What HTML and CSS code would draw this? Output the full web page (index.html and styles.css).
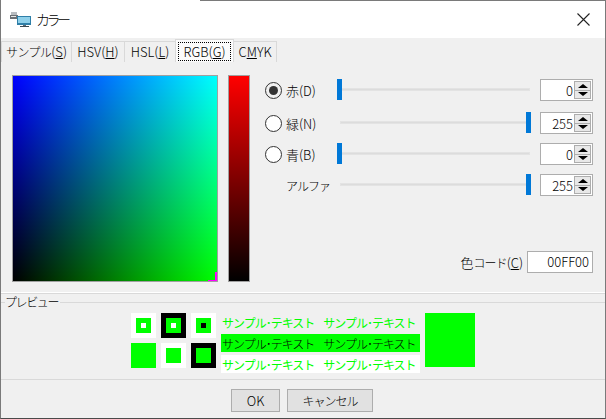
FILE: index.html
```html
<!DOCTYPE html>
<html lang="ja">
<head>
  <meta charset="UTF-8">
  <title>カラー</title>
  <link rel="stylesheet" href="styles.css">
</head>
<body>
  <div class="dialog">
    <div class="titlebar">
      <svg class="app-icon" width="22" height="17" viewBox="0 0 22 17">
        <rect x="1" y="1" width="6" height="3" fill="#b8bcc0"/>
        <rect x="0" y="4" width="8" height="4" fill="#6b7075"/>
        <rect x="1" y="5" width="5" height="1" fill="#e8e8e8"/>
        <rect x="7" y="5" width="14" height="9" fill="#2f7fa8"/>
        <rect x="8" y="6" width="12" height="6" fill="#8fd0ea"/>
        <rect x="13" y="14" width="3" height="1" fill="#5a6a74"/>
        <rect x="10" y="15" width="9" height="1" fill="#3c4a52"/>
      </svg>
      <span class="title">カラー</span>
      <svg class="close" width="13" height="13" viewBox="0 0 13 13">
        <path d="M0.5 0.5L12.5 12.5M12.5 0.5L0.5 12.5" stroke="#222" stroke-width="1.1" fill="none"/>
      </svg>
    </div>

    <div class="tabs">
      <div class="tab tab-first"><span class="kana">サンプル</span>(<u>S</u>)</div>
      <div class="tab tab-hsv">HSV(<u>H</u>)</div>
      <div class="tab tab-hsl">HSL(<u>L</u>)</div>
      <div class="tab tab-active"><span class="focus">RGB(<u>G</u>)</span></div>
      <div class="tab tab-cmyk">C<u>M</u>YK</div>
    </div>

    <div class="panel">
      <div class="picker">
        <div class="field"><div class="cursor"></div></div>
        <div class="strip"></div>
      </div>

      <div class="controls">
        <div class="row">
          <span class="radio checked"></span><span class="label">赤(D)</span>
          <div class="slider"><div class="thumb thumb-min"></div></div>
          <div class="spin"><span class="spin-value">0</span><span class="arrows"><i class="up"></i><i class="down"></i></span></div>
        </div>
        <div class="row row-green">
          <span class="radio"></span><span class="label">緑(N)</span>
          <div class="slider"><div class="thumb thumb-max"></div></div>
          <div class="spin"><span class="spin-value">255</span><span class="arrows"><i class="up"></i><i class="down"></i></span></div>
        </div>
        <div class="row">
          <span class="radio"></span><span class="label">青(B)</span>
          <div class="slider"><div class="thumb thumb-min"></div></div>
          <div class="spin"><span class="spin-value">0</span><span class="arrows"><i class="up"></i><i class="down"></i></span></div>
        </div>
        <div class="row">
          <span class="radio-space"></span><span class="label"><span class="kana">アルファ</span></span>
          <div class="slider"><div class="thumb thumb-max"></div></div>
          <div class="spin"><span class="spin-value">255</span><span class="arrows"><i class="up"></i><i class="down"></i></span></div>
        </div>
        <div class="code-row">
          <span class="code-label">色<span class="kana">コード</span>(<u>C</u>)</span>
          <div class="code-input">00FF00</div>
        </div>
      </div>
    </div>

    <div class="preview">
      <div class="preview-legend"><span class="kana">プレビュー</span></div>
      <div class="preview-body">
        <div class="swatches">
          <div class="swatch sw-white"><div class="inner"><div class="dot dot-white"></div></div></div>
          <div class="swatch sw-black"><div class="inner"><div class="dot dot-white"></div></div></div>
          <div class="swatch sw-white"><div class="inner"><div class="dot dot-black"></div></div></div>
          <div class="swatch sw-green"></div>
          <div class="swatch sw-white"><div class="inner"></div></div>
          <div class="swatch sw-black"><div class="inner"></div></div>
        </div>
        <div class="samples">
          <div class="sample sample-plain"><span class="kana">サンプル･テキスト</span><span class="kana">サンプル･テキスト</span></div>
          <div class="sample sample-green"><span class="kana">サンプル･テキスト</span><span class="kana">サンプル･テキスト</span></div>
          <div class="sample sample-white"><span class="kana">サンプル･テキスト</span><span class="kana">サンプル･テキスト</span></div>
        </div>
        <div class="big-swatch"></div>
      </div>
    </div>

    <div class="footer">
      <button class="btn btn-ok">OK</button>
      <button class="btn btn-cancel"><span class="kana">キャンセル</span></button>
    </div>
  </div>
</body>
</html>
```

FILE: styles.css
```css
* {
  box-sizing: border-box;
}
html, body {
  margin: 0;
  padding: 0;
}
body {
  font-family: "Noto Sans CJK JP", "Liberation Sans", sans-serif;
  font-size: 13px;
  font-weight: 300;
  color: #000;
  background-color: #f0f0f0;
  overflow: hidden;
}
u {
  text-underline-offset: 1px;
}
.kana {
  font-size: 12px;
  letter-spacing: -1px;
}
.dialog {
  width: 606px;
  height: 419px;
  display: flex;
  flex-direction: column;
  background-color: #f0f0f0;
  border-left: 1px solid #7a7a7a;
  border-right: 1px solid #7a7a7a;
  border-bottom: 1px solid #4a4a4a;
}

/* title bar */
.titlebar {
  position: relative;
  height: 38px;
  background-color: #fff;
  display: flex;
  align-items: center;
  padding: 0 15px 0 9px;
  flex-shrink: 0;
}
.titlebar::before {
  content: "";
  position: absolute;
  left: 199px;
  right: 0;
  top: 0;
  height: 1px;
  background-color: #7a7a7a;
}
.title {
  margin-left: 4px;
  font-size: 14px;
  letter-spacing: -3.5px;
}
.close {
  margin-left: auto;
}

/* tabs */
.tabs {
  height: 24px;
  display: flex;
  align-items: flex-end;
  flex-shrink: 0;
}
.tab {
  height: 21px;
  line-height: 20px;
  border: 1px solid #d9d9d9;
  border-bottom: none;
  background-color: #f0f0f0;
  text-align: center;
  white-space: nowrap;
  margin-right: -1px;
}
.tab-first { width: 71px; }
.tab-first .kana { letter-spacing: -0.6px; }
.tab-hsv { width: 54px; }
.tab-hsl { width: 52px; }
.tab-active {
  width: 59px;
  height: 23px;
  padding: 2px;
  background-color: #fbfbfb;
  position: relative;
  line-height: 17px;
}
.focus {
  display: block;
  height: 19px;
  border: 1px dotted #000;
}
.tab-cmyk { width: 44px; }

/* picker and sliders */
.panel {
  height: 231px;
  flex-shrink: 0;
  display: flex;
  padding: 13px 0 0 11px;
  border-bottom: 1px solid #fff;
}
.picker {
  display: flex;
  gap: 10px;
}
.field {
  position: relative;
  width: 206px;
  height: 207px;
  border: 1px solid #a0a0a0;
  background-image: linear-gradient(to right, #000, #0f0), linear-gradient(to bottom, #00f, #000);
  background-blend-mode: screen;
}
.cursor {
  position: absolute;
  right: 0;
  bottom: 0;
  width: 9px;
  height: 9px;
  border-right: 2px solid #f0f;
  border-bottom: 1px solid #f0f;
}
.strip {
  width: 22px;
  height: 207px;
  border: 1px solid #a0a0a0;
  background-image: linear-gradient(to bottom, #f00, #000);
}
.controls {
  margin-left: 15px;
  width: 328px;
  padding-top: 4px;
}
.row {
  display: flex;
  align-items: center;
  height: 22px;
  margin-bottom: 9px;
}
.row-green {
  margin-top: 11px;
}
.radio, .radio-space {
  width: 17px;
  height: 17px;
  flex-shrink: 0;
  margin-right: 4px;
}
.radio {
  border: 1px solid #333;
  border-radius: 50%;
  background-color: #fff;
  position: relative;
}
.radio.checked {
  background-color: #f0f0f0;
}
.radio.checked::after {
  content: "";
  position: absolute;
  left: 3px;
  top: 3px;
  width: 9px;
  height: 9px;
  border-radius: 50%;
  background-color: #333;
}
.label {
  width: 54px;
  flex-shrink: 0;
}
.slider {
  position: relative;
  width: 190px;
  height: 3px;
  margin-bottom: 2px;
  background-color: #dcdcdc;
  border: 1px solid #e3e3e3;
}
.thumb {
  position: absolute;
  top: -10px;
  width: 5px;
  height: 21px;
  background-color: #0078d7;
}
.thumb-min { left: -4px; }
.thumb-max { right: -2px; }
.spin {
  margin-left: 10px;
  width: 53px;
  height: 22px;
  border: 1px solid #adadad;
  background-color: #fff;
  display: flex;
  align-items: center;
  padding: 1px;
}
.spin-value {
  flex: 1;
  text-align: right;
  padding-right: 1px;
}
.arrows {
  width: 17px;
  height: 18px;
  display: flex;
  flex-direction: column;
  gap: 1px;
  background-color: #adadad;
  border: 1px solid #adadad;
}
.arrows i {
  flex: 1;
  background-color: #e8e8e8;
  display: flex;
  align-items: center;
  justify-content: center;
}
.arrows i::after {
  content: "";
  border-left: 5px solid transparent;
  border-right: 5px solid transparent;
}
.up::after { border-bottom: 4px solid #000; }
.down::after { border-top: 4px solid #000; }
.code-row {
  display: flex;
  justify-content: flex-end;
  align-items: center;
  gap: 4px;
  margin-top: 55px;
}
.code-input {
  width: 66px;
  height: 22px;
  line-height: 20px;
  border: 1px solid #adadad;
  background-color: #fff;
  text-align: right;
  padding-right: 3px;
}

/* preview */
.preview {
  height: 87px;
  flex-shrink: 0;
  border-top: 1px solid #d9d9d9;
  border-bottom: 1px solid #d9d9d9;
}
.preview-legend {
  height: 19px;
  position: relative;
  padding-left: 4px;
  line-height: 16px;
}
.preview-legend::before {
  content: "";
  position: absolute;
  left: 0;
  right: 0;
  top: 8px;
  height: 1px;
  background-color: #d9d9d9;
}
.preview-legend span {
  position: relative;
  background-color: #f0f0f0;
  display: inline-block;
  padding-right: 2px;
  white-space: nowrap;
  letter-spacing: -1.4px;
}
.preview-body {
  display: flex;
  padding-left: 130px;
}
.swatches {
  display: grid;
  grid-template-columns: repeat(3, 25px);
  grid-auto-rows: 25px;
  gap: 5px;
}
.swatch {
  display: flex;
  align-items: center;
  justify-content: center;
}
.sw-white { background-color: #fff; }
.sw-black { background-color: #000; }
.sw-green { background-color: #0f0; }
.inner {
  width: 15px;
  height: 15px;
  background-color: #0f0;
  display: flex;
  align-items: center;
  justify-content: center;
}
.dot {
  width: 5px;
  height: 5px;
}
.dot-white { background-color: #fff; }
.dot-black { background-color: #000; }
.samples {
  margin-left: 5px;
  width: 199px;
}
.sample {
  display: flex;
  gap: 9px;
  height: 18px;
  line-height: 20px;
  padding-left: 1px;
  white-space: nowrap;
  margin-bottom: 3px;
  font-weight: 400;
}
.sample-plain { color: #0f0; }
.sample-green { color: #000; background-color: #0f0; font-weight: 300; }
.sample-white { color: #0f0; background-color: #fff; }
.big-swatch {
  width: 50px;
  height: 54px;
  margin-left: 5px;
  background-color: #0f0;
}

/* buttons */
.footer {
  display: flex;
  justify-content: flex-start;
  padding: 9px 0 0 230px;
  gap: 7px;
}
.btn {
  height: 23px;
  font-family: inherit;
  font-size: 13px;
  font-weight: 300;
  color: #000;
  padding: 0;
  background-color: #e1e1e1;
  border: 1px solid #adadad;
  line-height: 19px;
}
.btn-ok { width: 49px; }
.btn-cancel { width: 86px; }
```
